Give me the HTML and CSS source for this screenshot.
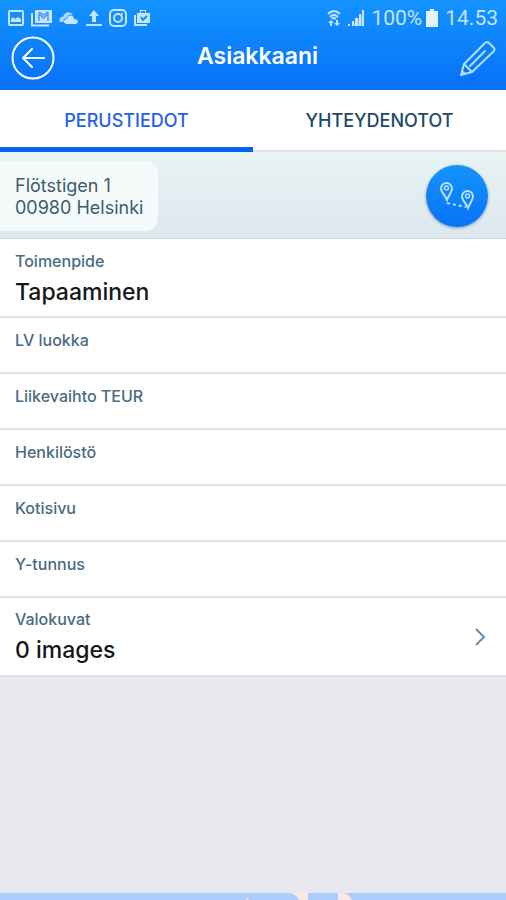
FILE: index.html
```html
<!DOCTYPE html>
<html lang="fi">
<head>
<meta charset="utf-8">
<meta name="viewport" content="width=device-width, initial-scale=1">
<title>Asiakkaani</title>
<link rel="stylesheet" href="styles.css">
</head>
<body>
<header class="top">
  <div class="status">
    <div class="status-left">
      <svg width="18" height="18" viewBox="0 0 18 18"><rect x="2" y="2" width="14" height="14" rx="1" fill="none" stroke="currentColor" stroke-width="2"/><path d="M4 13V10l2-2 2 2 3-2 3 2v3z" fill="currentColor"/></svg>
      <svg width="22" height="18" viewBox="0 0 22 18"><path d="M1 4v12.500h17" fill="none" stroke="currentColor" stroke-width="2"/><rect x="4" y="1" width="17" height="13" rx="1" fill="currentColor"/><path d="M8 12V5l4.500 4L17 5v7M8 3l4.500 3L17 3" fill="none" stroke="#3b9cfb" stroke-width="1.500"/></svg>
      <svg width="20" height="18" viewBox="0 0 20 18"><path d="M1 13c-2-3 1-6 3-5 1-6 8-6 10-2-4-1-6 1-6 3-3 0-4 2-3 4z" fill="currentColor" opacity=".85"/><path d="M8 15c-4 0-4-5 0-5 1-5 7-4 7 0 5 0 5 5 1 5z" fill="currentColor"/></svg>
      <svg width="18" height="18" viewBox="0 0 18 18"><path d="M9 1l5 6h-3v6H7V7H4zM1 15h16v2H1z" fill="currentColor"/></svg>
      <svg width="18" height="18" viewBox="0 0 18 18"><rect x="1" y="1" width="16" height="16" rx="4" fill="none" stroke="currentColor" stroke-width="2"/><circle cx="9" cy="9" r="4" fill="none" stroke="currentColor" stroke-width="2"/><circle cx="13" cy="5" r="1" fill="currentColor"/></svg>
      <svg width="18" height="18" viewBox="0 0 18 18"><path d="M2 6v10h12" fill="none" stroke="currentColor" stroke-width="2"/><path d="M4 4h3V1h6v3h4v10H4zM8 4h4V2H8z" fill="currentColor" fill-rule="evenodd"/><path d="M8 8l2 3 4-4" fill="none" stroke="#168bfb" stroke-width="2"/></svg>
    </div>
    <div class="status-right">
      <svg width="14" height="18" viewBox="0 0 14 18"><path d="M1 5q6-6 12 0M3 8q4-4 8 0M5 10q2-2 4 0" fill="none" stroke="currentColor" stroke-width="2"/><path d="M4 11l3 3H5v3H3v-3H1zM10 17l-3-3h2v-3h2v3h2z" fill="currentColor"/></svg>
      <svg width="18" height="18" viewBox="0 0 18 18"><path d="M1 17v-2h2v2zM5 17v-5h2v5zM8 17V9h3v8zM12 17V5h2v12zM15 17V1h2v16z" fill="currentColor"/><path d="M5 17L17 3v14z" fill="currentColor" opacity=".5"/></svg>
      <span>100%</span>
      <svg class="battery" width="12" height="18" viewBox="0 0 12 18"><path d="M4 0h4v2h4v16H0V2h4z" fill="currentColor"/></svg>
      <span class="clock">14.53</span>
    </div>
  </div>
  <div class="bar">
    <button class="icon-button" type="button" aria-label="Takaisin"><svg width="44" height="44" viewBox="0 0 44 44" fill="none" stroke="currentColor" stroke-width="2"><circle cx="22" cy="22" r="20.500"/><path d="M33 22H12M21 13l-9 9 9 9" stroke-linecap="round" stroke-linejoin="round"/></svg></button>
    <h1>Asiakkaani</h1>
    <button class="icon-button edit" type="button" aria-label="Muokkaa"><svg width="36" height="36" viewBox="0 0 36 36" fill="none" stroke="currentColor" stroke-width="2" stroke-linejoin="round" stroke-linecap="round"><path d="M1 35l3-11L25 3q2-2 4 0l5 5q1 2 0 3L12 32zM4 24l8 8M2 31l3 3M10 26L25 11"/></svg></button>
  </div>
</header>
<nav class="tabs">
  <a class="tab active" href="#perustiedot" aria-current="page">PERUSTIEDOT</a>
  <a class="tab" href="#yhteydenotot">YHTEYDENOTOT</a>
</nav>
<main id="perustiedot">
  <section class="place">
    <address>Flötstigen 1<br>00980 Helsinki</address>
    <button class="route" type="button" aria-label="Reitti"><svg width="36" height="30" viewBox="0 0 36 30" fill="none" stroke="currentColor" stroke-width="2"><path d="M8 19C6 14 2 11 2 7.500a5.500 5.500 0 0 1 11 0C13 11 10 14 8 19z"/><circle cx="7.500" cy="7" r="2" stroke-width="1.500"/><path d="M29 27c-2-5-6-8-6-11.500a5.500 5.500 0 0 1 11 0C34 19 31 22 29 27z"/><circle cx="28.500" cy="15" r="2" stroke-width="1.500"/><path d="M8 22l19 4" stroke-dasharray="3 3"/></svg></button>
  </section>
  <dl class="fields">
    <div class="row tall"><dt>Toimenpide</dt><dd>Tapaaminen</dd></div>
    <div class="row"><dt>LV luokka</dt></div>
    <div class="row"><dt>Liikevaihto TEUR</dt></div>
    <div class="row"><dt>Henkilöstö</dt></div>
    <div class="row"><dt>Kotisivu</dt></div>
    <div class="row"><dt>Y-tunnus</dt></div>
  </dl>
  <a class="row tall photos" href="#valokuvat">
    <span class="photos-text"><span class="label">Valokuvat</span><span class="value">0 images</span></span>
    <svg width="12" height="18" viewBox="0 0 12 18" fill="none" stroke="currentColor" stroke-width="2"><path d="M2 1l8 8-8 8"/></svg>
  </a>
</main>
<footer class="scene">
  <svg width="120" height="7" viewBox="0 0 120 7" aria-hidden="true"><path d="M0 4l3 3H0z" fill="#e4e7f2"/><path d="M44 0h18v7h-9q-1-4-9-7zM92 0q11-1 14 7H92z" fill="#f7eae6"/></svg>
</footer>
</body>
</html>
```
FILE: styles.css
```css
* {
  box-sizing: border-box;
}

body {
  display: flex;
  flex-direction: column;
  min-height: 100vh;
  margin: 0;
  background: #e8e8ee;
  color: #2e526b;
  font-family: Inter, "Liberation Sans", sans-serif;
}

svg {
  display: block;
}

button {
  padding: 0;
  border: 0;
  background: none;
  color: inherit;
}

a {
  color: inherit;
  text-decoration: none;
}

.top {
  height: 90px;
  background: linear-gradient(#1494ff, #0670f8);
  color: #fff;
}

.status {
  display: flex;
  justify-content: space-between;
  height: 36px;
  padding: 0 8px 0 7px;
  color: #c8e3ff;
  font: 22px/36px Roboto, sans-serif;
}

.status-left,
.status-right {
  display: flex;
  align-items: center;
  gap: 6px;
}

.status-right {
  font-size: 21px;
}

.battery {
  margin-left: -2px;
  color: #e6f3ff;
}

.clock {
  margin-left: 1px;
}

.bar {
  display: grid;
  grid-template-columns: 44px 1fr 36px;
  align-items: center;
  height: 44px;
  padding: 0 10px 0 11px;
}

.bar h1 {
  margin: 0;
  padding-bottom: 4px;
  font-size: 23px;
  font-weight: 600;
  line-height: 36px;
  text-align: center;
}

.edit {
  color: #b4dcff;
}

.tabs {
  display: flex;
  height: 62px;
  border-bottom: 2px solid #dfe6e8;
  background: #fff;
  color: #204966;
  font-size: 18px;
  font-weight: 500;
}

.tab {
  flex: 1;
  height: 62px;
  line-height: 62px;
  text-align: center;
}

.tab.active {
  border-bottom: 5px solid #0562ef;
  color: #2562e8;
}

.place {
  display: flex;
  align-items: center;
  justify-content: space-between;
  height: 87px;
  padding: 2px 18px 0 0;
  border-bottom: 1px solid #ccd7dc;
  background: linear-gradient(#e8f3f4, #dce8ee);
}

address {
  padding: 14px 15px 12px;
  border-radius: 0 12px 12px 0;
  background: #f5fafb;
  color: #3f5b6c;
  font-size: 18px;
  font-style: normal;
  line-height: 22px;
}

.route {
  display: grid;
  place-items: center;
  width: 62px;
  height: 62px;
  border-radius: 50%;
  background: linear-gradient(#1593fb, #0873f7);
  box-shadow: 0 1px 3px #8095a5;
  color: #b8e3ff;
}

.fields {
  margin: 0;
}

.row {
  height: 56px;
  padding: 12px 15px;
  border-bottom: 2px solid #dde4e9;
  background: #fff;
}

.row.tall {
  height: 79px;
}

dt,
.label {
  display: block;
  color: #486b83;
  font-size: 16px;
  font-weight: 500;
  line-height: 20px;
}

dd,
.value {
  display: block;
  margin: 7px 0 0;
  color: #151719;
  font-size: 23px;
  font-weight: 500;
  line-height: 28px;
}

.photos {
  display: flex;
  align-items: center;
  justify-content: space-between;
  padding-right: 20px;
}

.photos svg {
  color: #668fae;
}

.scene {
  display: flex;
  justify-content: center;
  height: 7px;
  margin-top: auto;
  padding-left: 106px;
  background: #aaccff;
}
```
